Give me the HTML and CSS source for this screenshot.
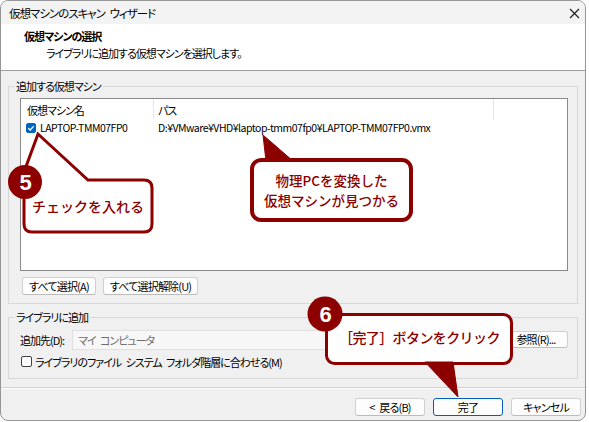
FILE: index.html
```html
<!DOCTYPE html>
<html lang="ja">
<head>
<meta charset="utf-8">
<title>仮想マシンのスキャン ウィザード</title>
<link rel="stylesheet" href="styles.css">
</head>
<body>
<div class="window">
  <div class="titlebar">
    <span class="title">仮想マシンのスキャン ウィザード</span>
    <svg class="close" width="11" height="11" viewBox="0 0 11 11"><path d="M1 1 L10 10 M10 1 L1 10" stroke="#1a1a1a" stroke-width="1.1" fill="none"/></svg>
  </div>
  <div class="header">
    <div class="h-title">仮想マシンの選択</div>
    <div class="h-sub">ライブラリに追加する仮想マシンを選択します。</div>
  </div>
  <div class="content">
    <fieldset class="group g1">
      <legend>追加する仮想マシン</legend>
      <div class="listbox">
        <div class="lv-head">
          <div class="c1">仮想マシン名</div>
          <div class="c2">パス</div>
        </div>
        <div class="lv-row">
          <div class="c1"><span class="chk on"><svg width="10" height="10" viewBox="0 0 10 10"><path d="M2.3 5.2 L4.2 7 L7.8 3.1" stroke="#fff" stroke-width="1.3" fill="none"/></svg></span>LAPTOP-TMM07FP0</div>
          <div class="c2">D:¥VMware¥VHD¥laptop-tmm07fp0¥LAPTOP-TMM07FP0.vmx</div>
        </div>
      </div>
      <div class="btnrow">
        <button class="btn">すべて選択(A)</button>
        <button class="btn">すべて選択解除(U)</button>
      </div>
    </fieldset>
    <fieldset class="group g2">
      <legend>ライブラリに追加</legend>
      <div class="dest-row">
        <span class="dest-label">追加先(D):</span>
        <div class="input">マイ コンピュータ</div>
        <button class="btn browse">参照(R)...</button>
      </div>
      <div class="cb-row"><span class="chk"></span>ライブラリのファイル システム フォルダ階層に合わせる(M)</div>
    </fieldset>
  </div>
  <div class="footer">
    <button class="btn fbtn">&lt; 戻る(B)</button>
    <button class="btn fbtn primary">完了</button>
    <button class="btn fbtn">キャンセル</button>
  </div>
</div>

<svg class="overlay" width="589" height="422" viewBox="0 0 589 422">
  <path d="M88 180 L144 180 Q152 180 152 188 L152 224 Q152 232 144 232 L32 232 Q24 232 24 224 L24 172 L38 134 Z" fill="#fff" stroke="#8c0000" stroke-width="3"/>
  <circle cx="25" cy="182" r="17" fill="#8c0000"/>
  <text class="num" x="25" y="189.5" text-anchor="middle">5</text>

  <rect x="252" y="160" width="159" height="60" rx="9" fill="#fff" stroke="#8c0000" stroke-width="4"/>
  <polygon points="263,135 266,161 293,161" fill="#8c0000" stroke="#8c0000" stroke-width="1"/>

  <rect x="326.5" y="314.5" width="185" height="49" rx="8" fill="#fff" stroke="#8c0000" stroke-width="3"/>
  <polygon points="425,362 453,362 458,397" fill="#8c0000" stroke="#8c0000" stroke-width="1"/>
  <circle cx="325" cy="314" r="17.5" fill="#8c0000"/>
  <text class="num" x="325" y="321.5" text-anchor="middle">6</text>
</svg>
<div class="ctext t5">チェックを入れる</div>
<div class="ctext tc">物理PCを変換した<br>仮想マシンが見つかる</div>
<div class="ctext t6">［完了］ボタンをクリック</div>
</body>
</html>
```
FILE: styles.css
```css
html, body {
  margin: 0;
  padding: 0;
  background: #ffffff;
}
body {
  position: relative;
  width: 589px;
  height: 422px;
  overflow: hidden;
  font-family: "Noto Sans CJK JP", "Noto Sans", sans-serif;
  font-size: 11px;
  letter-spacing: -1px;
  word-spacing: 3px;
  font-feature-settings: "palt";
  color: #000;
}
.window {
  width: 586px;
  height: 421px;
  box-sizing: border-box;
  border: 1px solid #959595;
  border-radius: 8px;
  overflow: hidden;
  background: #f0f0f0;
  display: flex;
  flex-direction: column;
}
.titlebar {
  height: 23px;
  flex: none;
  background: #f3f3f3;
  display: flex;
  align-items: center;
  justify-content: space-between;
  padding: 0 5px 0 8px;
}
.title { line-height: 16px; font-size: 11.5px; }
.close { display: block; margin-top: 1px; }
.header {
  height: 42px;
  flex: none;
  background: #fff;
  border-bottom: 1px solid #a0a0a0;
  padding-top: 4px;
}
.h-title {
  font-weight: bold;
  line-height: 16px;
  padding-left: 23px;
}
.h-sub {
  line-height: 16px;
  padding-left: 45px;
  margin-top: 1px;
}
.content {
  flex: 1;
  padding: 7px 7px 8px 7px;
}
.group {
  margin: 0;
  border: 1px solid #d8d8d8;
  min-inline-size: 0;
}
.group legend {
  padding: 0 2px;
  margin-left: -6px;
  line-height: 16px;
}
.g1 { padding: 4px 9px 8px 11px; }
.g2 { padding: 4px 9px 7px 11px; margin-top: 5px; }
.listbox {
  height: 173px;
  box-sizing: border-box;
  border: 1px solid #8a8a8a;
  background: #fff;
}
.lv-head, .lv-row {
  display: flex;
  align-items: center;
}
.lv-head { height: 20px; }
.lv-row {
  height: 17px;
  font-size: 10.5px;
  letter-spacing: -0.5px;
}
.c1 {
  width: 133px;
  box-sizing: border-box;
  display: flex;
  align-items: center;
  white-space: nowrap;
}
.c2 {
  width: 340px;
  box-sizing: border-box;
  padding-left: 4px;
  white-space: nowrap;
}
.lv-head .c1, .lv-head .c2 {
  height: 20px;
  border-right: 1px solid #e5e5e5;
  padding-top: 2px;
  line-height: 18px;
}
.lv-head .c1 { padding-left: 6px; }
.lv-row .c1 { padding-left: 5px; }
.chk {
  display: inline-block;
  width: 10px;
  height: 10px;
  box-sizing: border-box;
  border: 1px solid #404040;
  border-radius: 2px;
  background: #fff;
  margin-right: 4px;
  flex: none;
}
.chk.on {
  border-color: #0067c0;
  background: #0067c0;
}
.chk.on svg {
  display: block;
  margin: -1px 0 0 -1px;
}
.btn {
  font: inherit;
  letter-spacing: -0.8px;
  word-spacing: 3px;
  font-feature-settings: "palt";
  color: #000;
  height: 18px;
  padding: 0 6px;
  line-height: 15px;
  border: 1px solid #d0d0d0;
  border-bottom-color: #bcbcbc;
  border-radius: 3px;
  background: #fdfdfd;
  box-sizing: border-box;
  white-space: nowrap;
}
.btnrow {
  display: flex;
  gap: 7px;
  margin-top: 6px;
  padding-left: 2px;
}
.dest-row {
  display: flex;
  align-items: center;
  height: 21px;
}
.dest-label {
  width: 52px;
  flex: none;
  white-space: nowrap;
}
.input {
  flex: 1;
  height: 20px;
  box-sizing: border-box;
  border: 1px solid #e0e0e0;
  background: #f7f7f7;
  color: #6d6d6d;
  padding-left: 5px;
  line-height: 18px;
}
.browse {
  width: 64px;
  margin-left: 5px;
  height: 17px;
  flex: none;
}
.cb-row {
  display: flex;
  align-items: center;
  height: 19px;
  margin-top: 2px;
  white-space: nowrap;
}
.cb-row .chk {
  width: 11px;
  height: 11px;
  margin-left: 1px;
  margin-right: 3px;
}
.footer {
  height: 34px;
  flex: none;
  box-sizing: border-box;
  border-top: 1px solid #cfcfcf;
  box-shadow: inset 0 1px 0 #ffffff;
  display: flex;
  justify-content: flex-end;
  gap: 8px;
  padding: 10px 4px 0 0;
}
.fbtn {
  width: 70px;
  height: 18px;
}
.primary {
  border: 1px solid #005fb8;
}
.overlay {
  position: absolute;
  left: 0;
  top: 0;
  pointer-events: none;
}
.overlay .num {
  font-family: "Liberation Sans", Arial, sans-serif;
  font-weight: bold;
  font-size: 22px;
  fill: #ffffff;
}
.ctext {
  position: absolute;
  font-family: "Noto Sans CJK JP", sans-serif;
  font-size: 14px;
  font-weight: 500;
  line-height: 18px;
  letter-spacing: 0;
  word-spacing: 0;
  font-feature-settings: normal;
  color: #8c0000;
  white-space: nowrap;
}
.t5 { left: 32px; top: 197px; }
.tc {
  left: 252px;
  top: 170px;
  width: 159px;
  text-align: center;
  font-size: 13.5px;
  line-height: 20px;
}
.t6 { left: 339px; top: 328px; letter-spacing: -0.6px; }
```
